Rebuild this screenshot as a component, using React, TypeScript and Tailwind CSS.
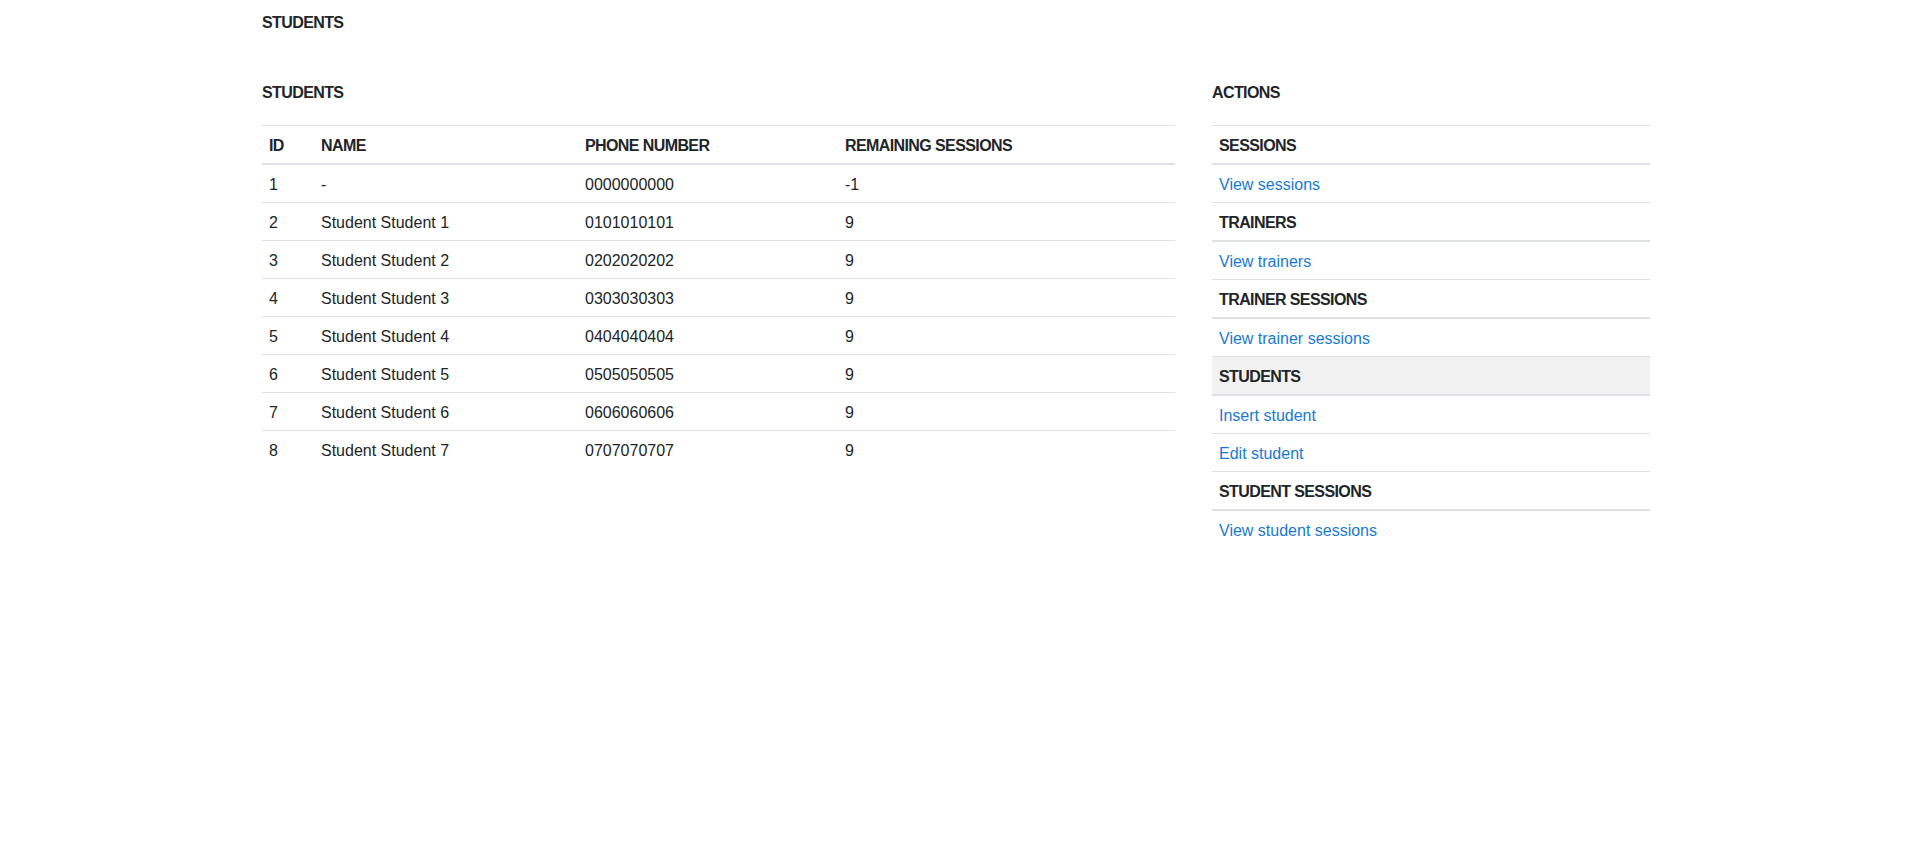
const students = [
  { id: 1, name: "-", phone: "0000000000", remaining: -1 },
  { id: 2, name: "Student Student 1", phone: "0101010101", remaining: 9 },
  { id: 3, name: "Student Student 2", phone: "0202020202", remaining: 9 },
  { id: 4, name: "Student Student 3", phone: "0303030303", remaining: 9 },
  { id: 5, name: "Student Student 4", phone: "0404040404", remaining: 9 },
  { id: 6, name: "Student Student 5", phone: "0505050505", remaining: 9 },
  { id: 7, name: "Student Student 6", phone: "0606060606", remaining: 9 },
  { id: 8, name: "Student Student 7", phone: "0707070707", remaining: 9 },
]

const actions = [
  { title: "SESSIONS", links: ["View sessions"] },
  { title: "TRAINERS", links: ["View trainers"] },
  { title: "TRAINER SESSIONS", links: ["View trainer sessions"] },
  { title: "STUDENTS", links: ["Insert student", "Edit student"], active: true },
  { title: "STUDENT SESSIONS", links: ["View student sessions"] },
]

const cols = "grid grid-cols-[51px_264px_260px_1fr]"
const cell = "px-2 pt-[9px] pb-[7px] leading-[21px] first:pl-[7px]"

export default function App() {
  return (
    <div className="min-h-screen bg-white text-[16px] text-[#212529] font-['Liberation_Sans',Arial,sans-serif]">
      <div className="mx-auto w-[1388px] pt-[11px]">
        <h1 className="font-bold leading-6 tracking-[-0.6px]">STUDENTS</h1>

        <div className="mt-[46px] flex justify-between">
          <div className="w-[913px]">
            <h2 className="font-bold leading-6 tracking-[-0.6px]">STUDENTS</h2>
            <div className="mt-5">
              <div className={`${cols} border-t border-b-2 border-[#dee2e6] font-bold tracking-[-0.6px]`}>
                <div className={cell}>ID</div>
                <div className={cell}>NAME</div>
                <div className={cell}>PHONE NUMBER</div>
                <div className={cell}>REMAINING SESSIONS</div>
              </div>
              {students.map((s, i) => (
                <div key={s.id} className={`${cols} ${i < students.length - 1 ? "border-b border-[#dee2e6]" : ""}`}>
                  <div className={cell}>{s.id}</div>
                  <div className={cell}>{s.name}</div>
                  <div className={cell}>{s.phone}</div>
                  <div className={cell}>{s.remaining}</div>
                </div>
              ))}
            </div>
          </div>

          <div className="w-[438px]">
            <h2 className="font-bold leading-6 tracking-[-0.6px]">ACTIONS</h2>
            <div className="mt-5 border-t border-[#dee2e6]">
              {actions.map((a, ai) => (
                <div key={a.title}>
                  <div className={`border-b-2 border-[#dee2e6] pl-[7px] pt-[9px] pb-[7px] leading-[21px] font-bold tracking-[-0.6px] ${a.active ? "bg-[#f2f2f2]" : ""}`}>
                    {a.title}
                  </div>
                  {a.links.map((l, li) => {
                    const last = ai === actions.length - 1 && li === a.links.length - 1
                    return (
                      <div key={l} className={`pl-[7px] pt-[9px] pb-[7px] leading-[21px] ${last ? "" : "border-b border-[#dee2e6]"}`}>
                        <a href="#" className="text-[#1779d6]">{l}</a>
                      </div>
                    )
                  })}
                </div>
              ))}
            </div>
          </div>
        </div>
      </div>
    </div>
  )
}
